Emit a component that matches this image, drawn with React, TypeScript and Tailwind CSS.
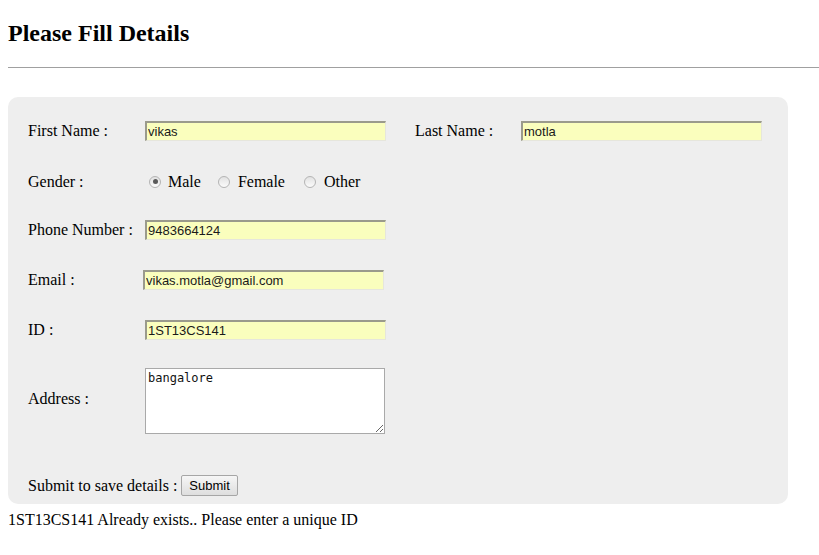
import React from 'react';

const serif = { fontFamily: '"Liberation Serif", "Times New Roman", serif' };
const sans = { fontFamily: '"Liberation Sans", Arial, sans-serif' };

const fieldCls =
  'h-[20px] w-[241px] bg-[#fafebd] border-t-2 border-l-2 border-b border-r border-t-[#9a9a8c] border-l-[#9a9a8c] border-b-[#e6e6dc] border-r-[#e6e6dc] px-[1px] text-[13px] leading-[16px] text-[#1a1a1a] outline-none';

const Radio = ({ checked }: { checked?: boolean }) => (
  <span className="inline-flex h-[12px] w-[12px] items-center justify-center rounded-full border border-[#b4b4b4] bg-gradient-to-b from-[#e2e2e2] to-[#fbfbfb]">
    {checked && <span className="h-[5px] w-[5px] rounded-full bg-[#5a5a5a]" />}
  </span>
);

export default function App() {
  return (
    <div className="min-h-[555px] overflow-hidden bg-white px-2 text-[16px] text-black" style={serif}>
      <h2 className="pt-[19px] text-[24px] font-bold leading-[28px]">Please Fill Details</h2>
      <div className="mt-[20px] mr-[-8px] h-px bg-[#a0a0a0]" />

      <form
        className="mt-[29px] flex w-[780px] flex-col rounded-[10px] bg-[#eeeeee] pl-[20px] pt-[24px] pb-[8px]"
        onSubmit={(e) => e.preventDefault()}
      >
        <div className="flex h-[20px] items-center">
          <label className="w-[117px]">First Name :</label>
          <input className={fieldCls} style={sans} defaultValue="vikas" />
          <label className="ml-[29px] w-[106px]">Last Name :</label>
          <input className={fieldCls} style={sans} defaultValue="motla" />
        </div>

        <div className="mt-[30px] flex h-[20px] items-center pt-[1px]">
          <label className="w-[121px]">Gender :</label>
          <span className="flex items-center">
            <Radio checked />
            <span className="ml-[7px]">Male</span>
          </span>
          <span className="ml-[17px] flex items-center">
            <Radio />
            <span className="ml-[8px]">Female</span>
          </span>
          <span className="ml-[19px] flex items-center">
            <Radio />
            <span className="ml-[8px]">Other</span>
          </span>
        </div>

        <div className="mt-[29px] flex h-[20px] items-center">
          <label className="w-[117px] whitespace-nowrap">Phone Number :</label>
          <input className={fieldCls} style={sans} defaultValue="9483664124" />
        </div>

        <div className="mt-[30px] flex h-[20px] items-center">
          <label className="w-[115px]">Email :</label>
          <input className={fieldCls} style={sans} defaultValue="vikas.motla@gmail.com" />
        </div>

        <div className="mt-[30px] flex h-[20px] items-center">
          <label className="w-[117px]">ID :</label>
          <input className={fieldCls} style={sans} defaultValue="1ST13CS141" />
        </div>

        <div className="mt-[28px] flex h-[66px] items-center">
          <label className="mb-[4px] w-[117px]">Address :</label>
          <textarea
            className="h-[66px] w-[240px] resize border border-[#a9a9a9] bg-white px-[2px] py-[2px] text-[12px] leading-[15px] text-[#111] outline-none"
            style={{ fontFamily: '"DejaVu Sans Mono", "Liberation Mono", monospace' }}
            defaultValue="bangalore"
          />
        </div>

        <div className="mt-[41px] flex h-[21px] items-center">
          <span>Submit to save details :</span>
          <button
            type="submit"
            className="ml-[4px] h-[21px] rounded-[2px] border border-[#a6a6a6] bg-gradient-to-b from-[#f6f6f6] to-[#dedede] px-[7px] text-[13px] leading-[17px] text-black"
            style={sans}
          >
            Submit
          </button>
        </div>
      </form>

      <p className="mt-[7px] leading-[18px]">1ST13CS141 Already exists.. Please enter a unique ID</p>
    </div>
  );
}
